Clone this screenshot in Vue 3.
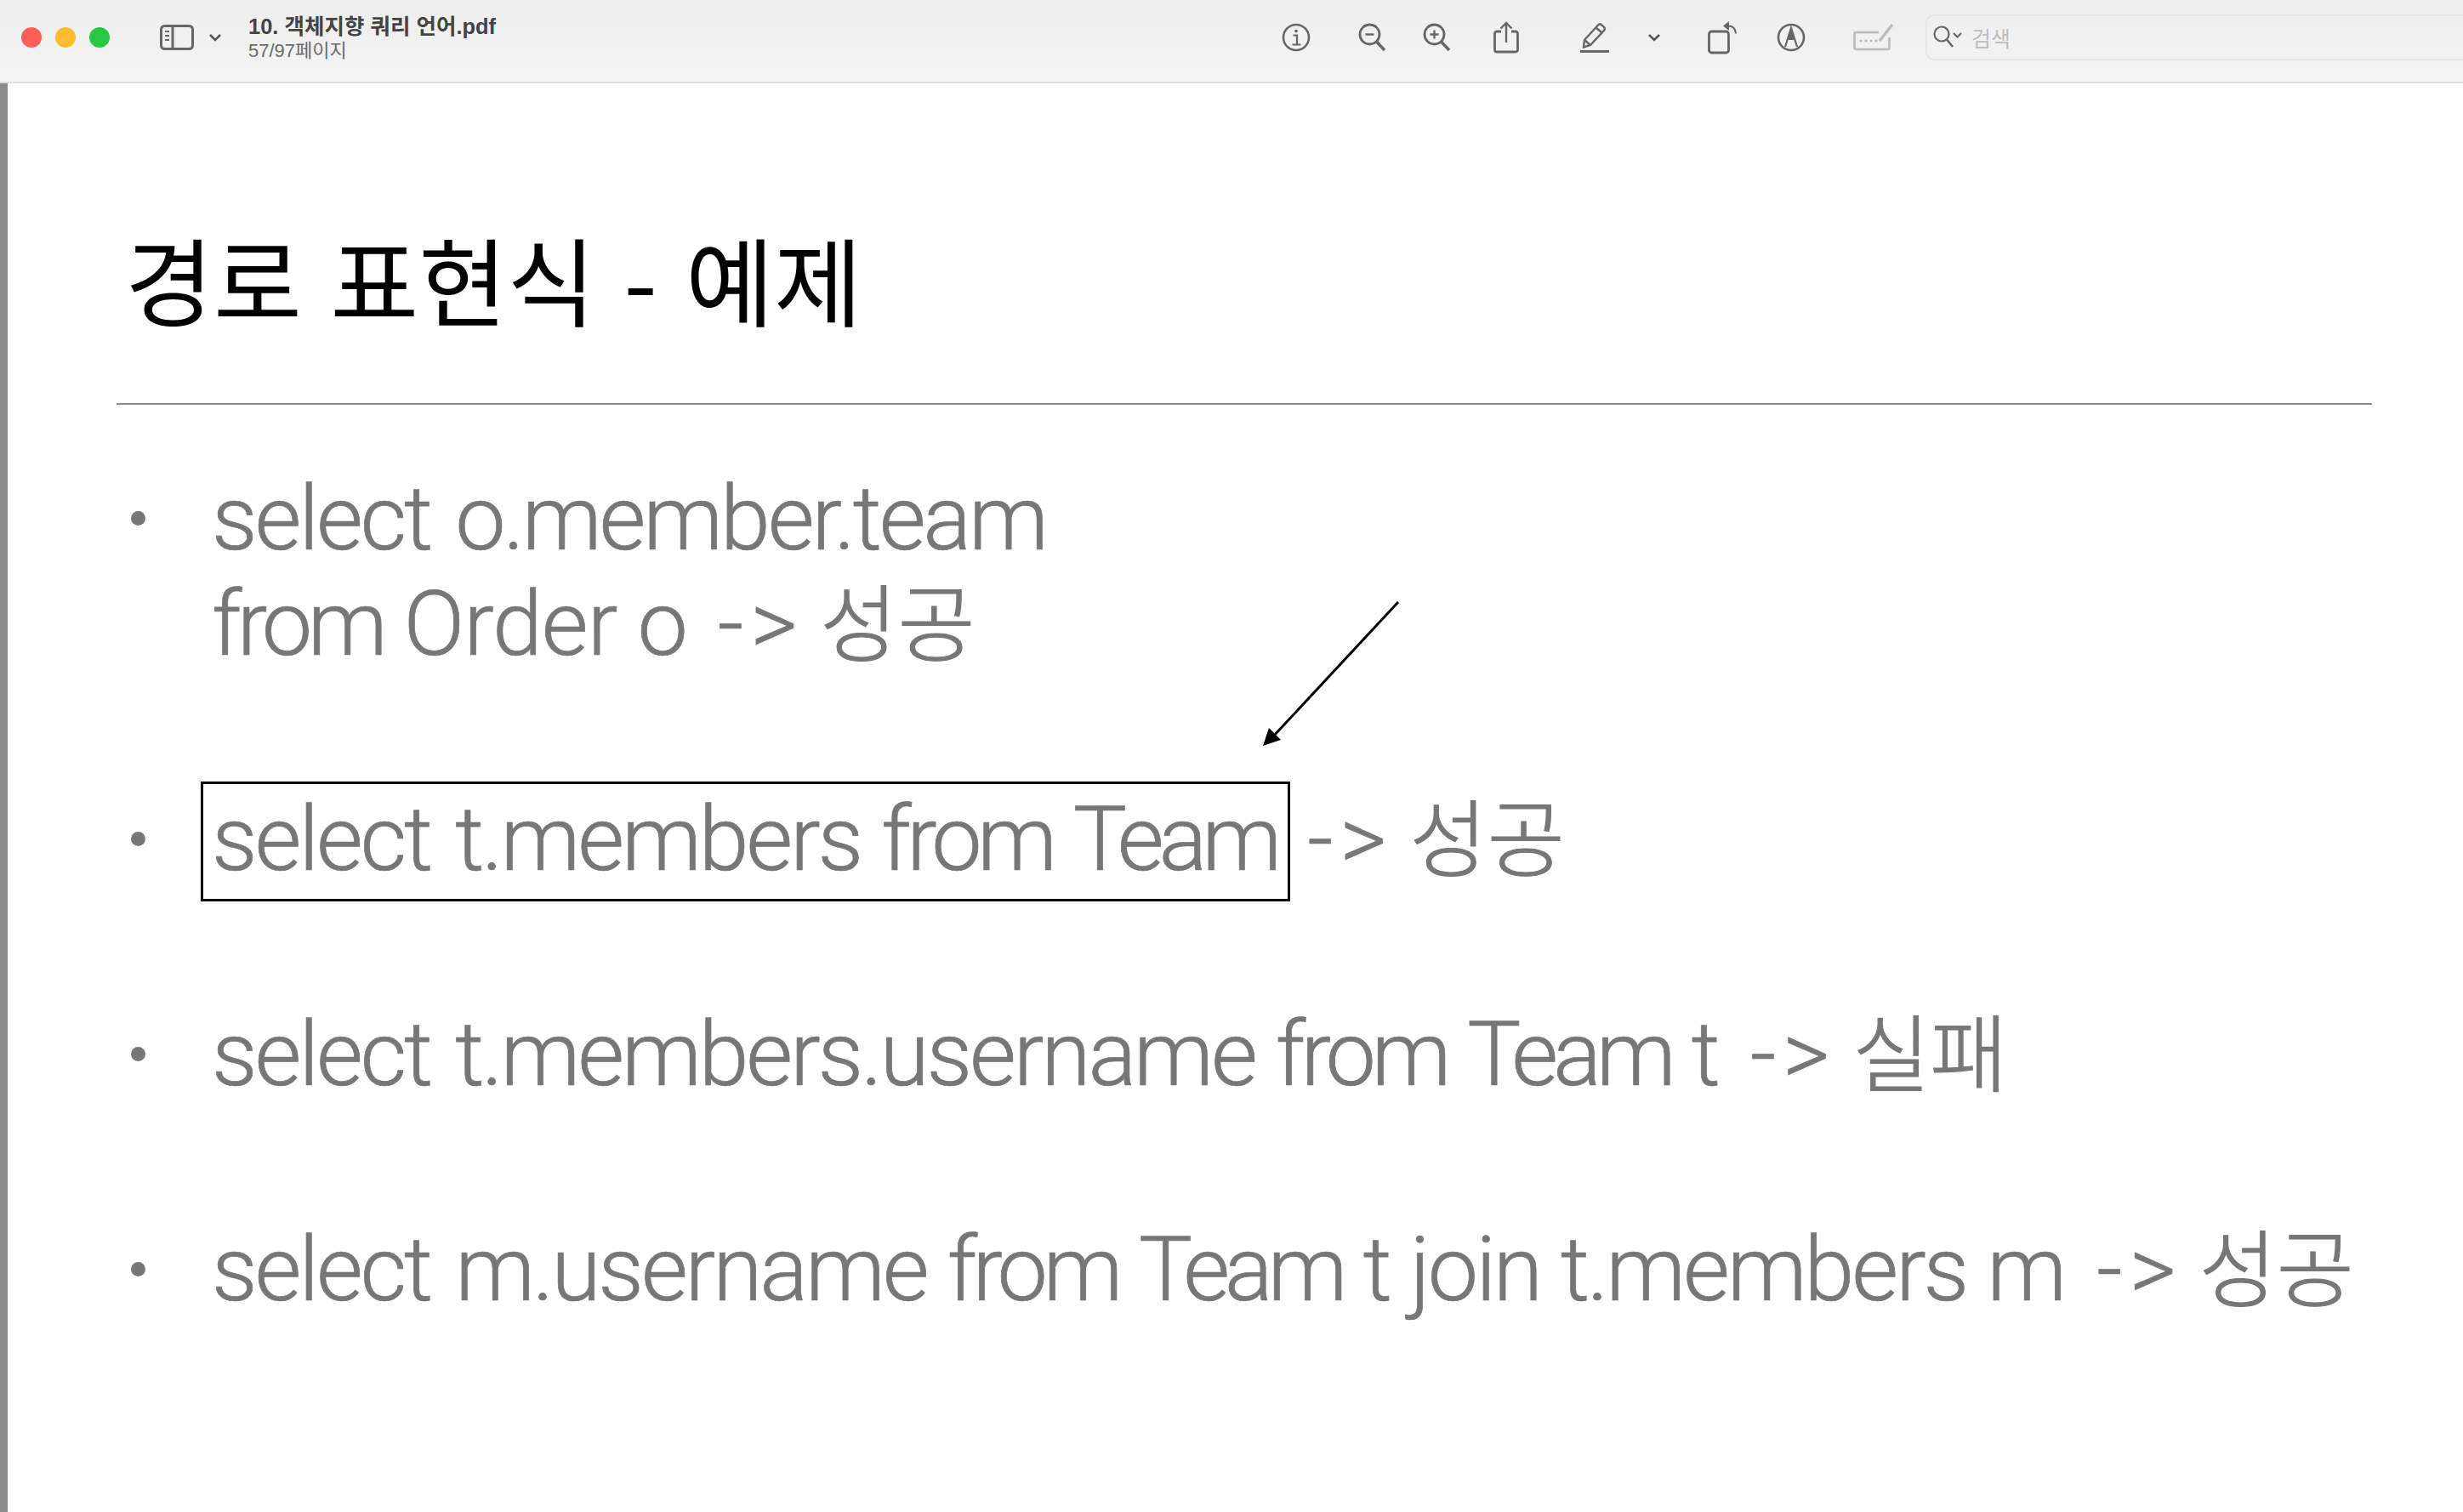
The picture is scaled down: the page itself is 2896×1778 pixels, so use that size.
<script setup>
const items = [
  { id: 1, lines: [{ t: 'select o.member.team', ko: '' }, { t: 'from Order o ', ko: '성공' }], cls: 'first' },
  { id: 2, box: 'select t.members from Team', ko: '성공', cls: 'gap' },
  { id: 3, lines: [{ t: 'select t.members.username from Team t ', ko: '실패' }], cls: 'gap' },
  { id: 4, lines: [{ t: 'select m.username from Team t join t.members m ', ko: '성공' }], cls: 'gap' }
]
const tokens = (text) => text.split(/(select|from|Team|Order)/).filter(Boolean)
const tokenClass = (tok) => ({ select: 'w-select', from: 'w-from', Team: 'w-team', Order: 'w-wide' })[tok] || ''
</script>

<template>
  <div class="window">
    <header class="toolbar">
      <div class="lights">
        <span class="light red"></span>
        <span class="light yellow"></span>
        <span class="light green"></span>
      </div>
      <svg class="ic side" viewBox="0 0 40 30" fill="none" stroke="#666" stroke-width="3">
        <rect x="1.5" y="1.5" width="37" height="27" rx="4"/>
        <path d="M15 2v26"/>
        <path d="M6 8h5M6 13h5M6 18h5" stroke-width="2"/>
      </svg>
      <svg class="ic chev sidechev" viewBox="0 0 16 10" fill="none" stroke="#555" stroke-width="2.6"><path d="M2 2l6 6 6-6"/></svg>
      <div class="doc">
        <div class="docname">10. 객체지향 쿼리 언어.pdf</div>
        <div class="docpage">57/97페이지</div>
      </div>
      <svg class="ic info" viewBox="0 0 34 34" fill="none" stroke="#666" stroke-width="2.6">
        <circle cx="17" cy="17" r="15"/>
        <circle cx="17" cy="9.6" r="1.8" fill="#666" stroke="none"/>
        <path d="M13.5 14.5H18V25M12.5 25.5h10" stroke-width="2.2"/>
      </svg>
      <svg class="ic zout" viewBox="0 0 34 34" fill="none" stroke="#666" stroke-width="2.8">
        <circle cx="13.5" cy="13.5" r="11.5"/>
        <path d="M21.5 22L31 32" stroke-width="3.4"/>
        <path d="M8.5 13.5h10" stroke-width="2.4"/>
      </svg>
      <svg class="ic zin" viewBox="0 0 34 34" fill="none" stroke="#666" stroke-width="2.8">
        <circle cx="13.5" cy="13.5" r="11.5"/>
        <path d="M21.5 22L31 32" stroke-width="3.4"/>
        <path d="M8.5 13.5h10M13.5 8.5v10" stroke-width="2.4"/>
      </svg>
      <svg class="ic share" viewBox="0 0 30 38" fill="none" stroke="#666" stroke-width="2.8">
        <path d="M9 12H4a2.5 2.5 0 0 0-2.5 2.5v19A2.5 2.5 0 0 0 4 36h22a2.5 2.5 0 0 0 2.5-2.5v-19A2.5 2.5 0 0 0 26 12h-5"/>
        <path d="M15 25V2M8.5 8.5L15 2l6.5 6.5" stroke-width="2.4"/>
      </svg>
      <svg class="ic pen" viewBox="0 0 36 36" fill="none" stroke="#666" stroke-width="2.4">
        <path d="M6 21L22 3.5a3 3 0 0 1 4.2-.2l2.6 2.4a3 3 0 0 1 .2 4.2L13 27l-8 2.5z"/>
        <path d="M6 21l7 6M19.5 6.5l7 6"/>
        <path d="M1 34.5h34" stroke-width="3"/>
      </svg>
      <span class="divider"></span>
      <svg class="ic chev penchev" viewBox="0 0 16 10" fill="none" stroke="#555" stroke-width="2.6"><path d="M2 2l6 6 6-6"/></svg>
      <svg class="ic rotate" viewBox="0 0 36 40" fill="none" stroke="#666" stroke-width="2.8">
        <rect x="1.5" y="13" width="23" height="25" rx="3"/>
        <path d="M24 6.5c5 0 8.500 2.500 9 9" stroke-width="2"/>
        <path d="M25 1v11l-7-5.500z" fill="#666" stroke="none"/>
      </svg>
      <svg class="ic markup" viewBox="0 0 34 34" fill="none" stroke="#666" stroke-width="2.6">
        <circle cx="17" cy="17" r="15"/>
        <path d="M10 28L17 6l7 22" stroke-width="2.2"/>
        <path d="M17 6l-3.500 14h7z" fill="#666" stroke="none"/>
      </svg>
      <svg class="ic form" viewBox="0 0 50 34" fill="none" stroke="#bbb" stroke-width="2.6">
        <path d="M30 11H3a1.500 1.500 0 0 0-1.500 1.500v17A1.500 1.500 0 0 0 3 31h38a1.500 1.500 0 0 0 1.500-1.500V17"/>
        <path d="M31 21L46 2" stroke-width="3.400"/>
        <circle cx="9" cy="21" r="1.600" fill="#bbb" stroke="none"/>
        <circle cx="15" cy="21" r="1.600" fill="#bbb" stroke="none"/>
        <circle cx="21" cy="21" r="1.600" fill="#bbb" stroke="none"/>
        <circle cx="27" cy="21" r="1.600" fill="#bbb" stroke="none"/>
      </svg>
      <div class="search">
        <svg class="ic sglass" viewBox="0 0 36 28" fill="none" stroke="#666" stroke-width="2.200">
          <circle cx="10" cy="10" r="8.500"/>
          <path d="M16 16.500L23 25" stroke-width="2.600"/>
          <path d="M24 9l4.500 4.500L33 9" stroke-width="2"/>
        </svg>
        <span class="placeholder">검색</span>
      </div>
    </header>

    <main class="page">
      <h1 class="title">경로 표현식 - 예제</h1>
      <hr class="rule" />
      <ul class="list">
        <li v-for="item in items" :key="item.id" class="item" :class="item.cls">
          <span class="dot"></span>
          <div class="body">
            <template v-if="item.lines">
              <div v-for="line in item.lines" :key="line.t" class="line"><span v-for="(tok, i) in tokens(line.t)" :key="i" :class="tokenClass(tok)">{{ tok }}</span><template v-if="line.ko"><span class="op">-&gt;</span><span class="ko">{{ line.ko }}</span></template></div>
            </template>
            <div v-else class="line"><span class="boxed"><span v-for="(tok, i) in tokens(item.box)" :key="i" :class="tokenClass(tok)">{{ tok }}</span></span><span class="op opafter">-&gt;</span><span class="ko">{{ item.ko }}</span></div>
          </div>
        </li>
      </ul>
      <svg class="arrow" viewBox="0 0 170 180" fill="none">
        <path d="M163 3L16 161" stroke="#000" stroke-width="3"/>
        <path d="M4 172L11 151 25 165z" fill="#000"/>
      </svg>
    </main>
  </div>
</template>

<style>
html, body { margin: 0; background: #fff; }
</style>

<style scoped>
.window {
  width: 2896px;
  height: 1778px;
  overflow: hidden;
  background: #fff;
  font-family: "Roboto", "Noto Sans CJK KR", sans-serif;
}
.toolbar {
  height: 98px;
  box-sizing: border-box;
  padding-bottom: 8px;
  display: flex;
  align-items: center;
  background: linear-gradient(#eeeeee, #f4f4f4);
  border-bottom: 2px solid #dedede;
  position: relative;
  overflow: hidden;
}
.lights { display: flex; gap: 16px; margin-left: 25px; flex: none; }
.light { width: 24px; height: 24px; border-radius: 50%; }
.red { background: #ff5f57; }
.yellow { background: #febc2e; }
.green { background: #28c840; }
.ic { flex: none; display: block; }
.side { width: 40px; height: 30px; margin-left: 59px; }
.chev { width: 16px; height: 10px; }
.sidechev { margin-left: 17px; }
.doc { flex: none; width: 1215px; margin-left: 31px; }
.docname { font: 700 25.500px/30px "Liberation Sans", "Noto Sans CJK KR", sans-serif; color: #444; margin-top: 2px; }
.docpage { font: 400 22px/28px "Liberation Sans", "Noto Sans CJK KR", sans-serif; color: #6a6a6a; }
.info { width: 34px; height: 34px; }
.zout { width: 34px; height: 34px; margin-left: 56px; }
.zin { width: 34px; height: 34px; margin-left: 42px; }
.share { width: 30px; height: 38px; margin-left: 49px; }
.pen { width: 36px; height: 36px; margin-left: 71px; }
.divider { width: 2px; height: 40px; background: #dcdcdc; margin-left: 22px; }
.penchev { margin-left: 22px; }
.rotate { width: 36px; height: 40px; margin-left: 55px; }
.markup { width: 34px; height: 34px; margin-left: 45px; }
.form { width: 50px; height: 34px; margin-left: 56px; }
.search {
  flex: none;
  width: 700px;
  height: 54px;
  box-sizing: border-box;
  margin-left: 35px;
  padding-left: 7px;
  display: flex;
  align-items: center;
  border: 2px solid #e6e6e6;
  border-radius: 10px;
}
.sglass { width: 36px; height: 28px; }
.placeholder { margin-left: 9px; font: 400 25px/1 "Noto Sans CJK KR", sans-serif; color: #bdbdbd; }
.page {
  position: relative;
  height: 1680px;
  box-sizing: border-box;
  border-left: 9px solid #8c8c8c;
  padding-left: 128px;
}
.title {
  margin: 0;
  padding-top: 161px;
  padding-left: 10px;
  font: 400 113px/134px "Noto Sans CJK KR", sans-serif;
  word-spacing: 8px;
  color: #000;
}
.rule {
  width: 2652px;
  margin: 81px 0 0;
  border: 0;
  border-top: 2px solid #8e8e8e;
}
.list { list-style: none; margin: 0; padding: 0; }
.item {
  display: flex;
  align-items: flex-start;
  font-size: 106px;
  line-height: 124px;
  letter-spacing: -3.150px;
  word-spacing: 1.500px;
  color: #777;
  font-weight: 300;
  font-variant-ligatures: none;
  -webkit-text-stroke: 0.700px #777;
}
.dot { width: 17px; height: 17px; border-radius: 50%; background: #777; margin: 53px 0 0 17px; flex: none; }
.body { margin-left: 78px; white-space: pre; }
.first { margin-top: 72px; }
.gap { margin-top: 129px; }
.w-select { margin-right: 5px; }
.w-from { letter-spacing: -5.500px; }
.w-team { letter-spacing: -6.100px; }
.w-wide { letter-spacing: -1px; }
.op { margin-left: 14px; margin-right: 19px; letter-spacing: 8px; }
.opafter { margin-left: 36px; }
.ko { font-family: "Noto Sans CJK KR", sans-serif; font-size: 99px; font-weight: 300; line-height: 0; letter-spacing: 0; -webkit-text-stroke: 1.200px #777; }
.boxed { position: relative; }
.boxed::after {
  content: "";
  position: absolute;
  left: -13px;
  right: -16px;
  top: -6px;
  bottom: -11px;
  border: 3px solid #000;
}
.arrow { position: absolute; left: 1472px; top: 607px; width: 170px; height: 180px; }
</style>
